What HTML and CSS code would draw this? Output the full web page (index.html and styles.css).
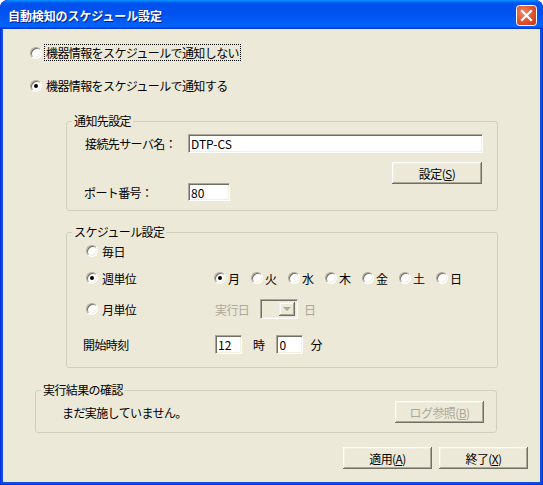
FILE: index.html
```html
<!DOCTYPE html>
<html lang="ja">
<head>
<meta charset="utf-8">
<title>自動検知のスケジュール設定</title>
<link rel="stylesheet" href="styles.css">
</head>
<body>
<div class="window">
  <div class="titlebar">
    <span class="title">自動検知のスケジュール設定</span>
    <span class="close">
      <svg width="21" height="21" viewBox="0 0 21 21">
        <defs>
          <radialGradient id="cg" cx="0.35" cy="0.35" r="0.85">
            <stop offset="0" stop-color="#F08A64"/>
            <stop offset="0.55" stop-color="#E0532C"/>
            <stop offset="1" stop-color="#C23A1B"/>
          </radialGradient>
        </defs>
        <rect x="0.5" y="0.5" width="20" height="20" rx="3" fill="url(#cg)" stroke="#fff"/>
        <path d="M6 6 L15 15 M15 6 L6 15" stroke="#fff" stroke-width="2.2" stroke-linecap="square"/>
      </svg>
    </span>
  </div>
  <div class="client">
    <div class="opt opt-first"><span class="radio"></span><span class="olabel focus">機器情報をスケジュールで通知しない</span></div>
    <div class="opt opt-second"><span class="radio checked"></span><span class="olabel">機器情報をスケジュールで通知する</span></div>

    <fieldset class="group g-notify">
      <legend>通知先設定</legend>
      <div class="frow r-server"><span class="flabel">接続先サーバ名：</span><span class="edit e-server">DTP-CS</span></div>
      <div class="btn-row"><span class="btn">設定(<u>S</u>)</span></div>
      <div class="frow r-port"><span class="flabel">ポート番号：</span><span class="edit e-port">80</span></div>
    </fieldset>

    <fieldset class="group g-sched">
      <legend>スケジュール設定</legend>
      <div class="srow s-daily"><span class="c1"><span class="radio"></span><span>毎日</span></span></div>
      <div class="srow s-weekly">
        <span class="c1"><span class="radio checked"></span><span>週単位</span></span>
        <span class="days">
          <span class="day"><span class="radio checked"></span><span>月</span></span>
          <span class="day"><span class="radio"></span><span>火</span></span>
          <span class="day"><span class="radio"></span><span>水</span></span>
          <span class="day"><span class="radio"></span><span>木</span></span>
          <span class="day"><span class="radio"></span><span>金</span></span>
          <span class="day"><span class="radio"></span><span>土</span></span>
          <span class="day"><span class="radio"></span><span>日</span></span>
        </span>
      </div>
      <div class="srow s-monthly">
        <span class="c1"><span class="radio"></span><span>月単位</span></span>
        <span class="dis exec">実行日</span>
        <span class="combo"><span class="arrow"><span class="tri"></span></span></span>
        <span class="dis dayunit">日</span>
      </div>
      <div class="srow s-start">
        <span class="c1 c1-plain">開始時刻</span>
        <span class="edit e-hour">12</span>
        <span class="unit u-hour">時</span>
        <span class="edit e-min">0</span>
        <span class="unit u-min">分</span>
      </div>
    </fieldset>

    <fieldset class="group g-result">
      <legend>実行結果の確認</legend>
      <div class="rrow"><span>まだ実施していません。</span><span class="btn btn-dis">ログ参照(<u>B</u>)</span></div>
    </fieldset>

    <div class="footer">
      <span class="btn">適用(<u>A</u>)</span>
      <span class="btn">終了(<u>X</u>)</span>
    </div>
  </div>
</div>
</body>
</html>
```
FILE: styles.css
```css
html, body {
  margin: 0;
  padding: 0;
  background: #ffffff;
}
body {
  font-family: "Noto Sans CJK JP", "Noto Sans", sans-serif;
  font-size: 12px;
}
.window {
  width: 543px;
  height: 485px;
  display: flex;
  flex-direction: column;
  background: #0A50E2;
  box-shadow: inset 0 0 0 1px #0831D9;
  border-radius: 8px 8px 0 0;
  overflow: hidden;
}
.titlebar {
  height: 29px;
  flex: none;
  display: flex;
  align-items: center;
  justify-content: space-between;
  padding: 1px 6px 0 8px;
  box-sizing: border-box;
  border-radius: 8px 8px 0 0;
  background: linear-gradient(180deg, #0997FF 0px, #0053EE 3px, #0050EE 12px, #0062F8 25px, #0066FF 26px, #005BFF 27px, #003DD7 28px, #003DD7 29px);
}
.title {
  color: #ffffff;
  font-weight: bold;
  font-size: 12px;
  letter-spacing: -0.1px;
  text-shadow: 1px 1px 0 #0A1E8C;
}
.close {
  display: flex;
  width: 21px;
  height: 21px;
}
.client {
  flex: 1;
  margin: 0 3px 3px 3px;
  background: #ECE9D8;
  color: #000;
  letter-spacing: -0.6px;
  display: flex;
  flex-direction: column;
}

/* radio */
.radio {
  position: relative;
  flex: none;
  width: 12px;
  height: 12px;
  box-sizing: border-box;
  border-radius: 50%;
  border: 1px solid;
  border-color: #ACA899 #ffffff #ffffff #ACA899;
  background: #ffffff;
  box-shadow: inset 1px 1px 0 #716F64, inset -1px -1px 0 #F1EFE2;
}
.radio.checked::after {
  content: "";
  position: absolute;
  left: 3px;
  top: 3px;
  width: 4px;
  height: 4px;
  border-radius: 50%;
  background: #000;
}

.opt {
  display: flex;
  align-items: center;
  height: 17px;
  margin-left: 27px;
}
.opt-first { margin-top: 15px; }
.opt-second { margin-top: 16px; }
.olabel {
  margin-left: 2px;
  padding: 0 1px;
  line-height: 15px;
  border: 1px solid transparent;
}
.olabel.focus {
  border: 1px dotted #000;
}

/* group boxes */
.group {
  margin: 0;
  padding: 0;
  border: 1px solid #D0D0BF;
  border-radius: 3px;
  box-sizing: border-box;
  min-inline-size: 0;
}
.group legend {
  padding: 0 2px;
  margin-left: 5px;
  line-height: 14px;
  height: 14px;
}

/* edit boxes */
.edit {
  box-sizing: border-box;
  display: flex;
  align-items: center;
  border: 1px solid;
  border-color: #ACA899 #ffffff #ffffff #ACA899;
  box-shadow: inset 1px 1px 0 #716F64, inset -1px -1px 0 #F1EFE2;
  background: #ffffff;
  padding: 0 2px;
  letter-spacing: 0;
  flex: none;
}

/* buttons */
.btn {
  width: 89px;
  height: 22px;
  box-sizing: border-box;
  display: flex;
  align-items: center;
  justify-content: center;
  background: #ECE9D8;
  box-shadow: inset -1px -1px 0 #716F64, inset 1px 1px 0 #ffffff, inset -2px -2px 0 #ACA899, inset 2px 2px 0 #F1EFE2;
  flex: none;
}
.btn u {
  text-decoration: underline;
  text-underline-offset: 1px;
}
.btn-dis {
  color: #ACA899;
}

/* group 1 */
.g-notify {
  margin: 20px 0 0 63px;
  width: 432px;
  height: 97px;
}
.frow {
  display: flex;
  align-items: center;
}
.flabel {
  width: 103px;
  flex: none;
}
.r-server {
  margin: 6px 0 0 18px;
  height: 19px;
}
.e-server {
  width: 295px;
  height: 19px;
}
.btn-row {
  display: flex;
  margin: 9px 0 0 325px;
  height: 22px;
}
.btn-row .btn {
  width: 90px;
}
.r-port {
  margin: -1px 0 0 17px;
  height: 18px;
}
.r-port .flabel {
  width: 104px;
}
.e-port {
  width: 42px;
  height: 18px;
}

/* group 2 */
.g-sched {
  margin: 14px 0 0 63px;
  width: 432px;
  height: 143px;
}
.srow {
  display: flex;
  align-items: center;
  height: 20px;
  margin-left: 16px;
}
.s-daily { margin-top: 2px; }
.s-weekly { margin-top: 7px; }
.s-monthly { margin-top: 11px; }
.s-start { margin-top: 16px; height: 19px; }
.c1 {
  width: 131px;
  flex: none;
  display: flex;
  align-items: center;
}
.c1 .radio {
  margin: 0 4px 0 3px;
}
.days {
  display: flex;
  align-items: center;
}
.day {
  display: flex;
  align-items: center;
  width: 37px;
}
.day .radio {
  margin-right: 2px;
}
.dis {
  color: #ACA899;
}
.exec {
  width: 45px;
  flex: none;
  padding-left: 1px;
}
.combo {
  box-sizing: border-box;
  width: 38px;
  height: 20px;
  display: flex;
  justify-content: flex-end;
  align-items: stretch;
  padding: 2px;
  border: 1px solid;
  border-color: #ACA899 #ffffff #ffffff #ACA899;
  box-shadow: inset 1px 1px 0 #716F64, inset -1px -1px 0 #F1EFE2;
  background: #ECE9D8;
  flex: none;
}
.arrow {
  width: 16px;
  display: flex;
  align-items: center;
  justify-content: center;
  background: #ECE9D8;
  box-shadow: inset -1px -1px 0 #716F64, inset 1px 1px 0 #F1EFE2, inset -2px -2px 0 #ACA899, inset 2px 2px 0 #ffffff;
}
.tri {
  width: 0;
  height: 0;
  border-left: 4px solid transparent;
  border-right: 4px solid transparent;
  border-top: 4px solid #ACA899;
}
.dayunit {
  margin-left: 6px;
}
.c1-plain {
  width: 132px;
}
.e-hour {
  width: 27px;
  height: 19px;
}
.u-hour {
  margin: 0 12px 0 11px;
}
.e-min {
  width: 27px;
  height: 19px;
}
.u-min {
  margin-left: 7px;
}

/* group 3 */
.g-result {
  margin: 15px 0 0 32px;
  width: 462px;
  height: 50px;
}
.rrow {
  display: flex;
  align-items: center;
  justify-content: space-between;
  margin: 4px 12px 0 26px;
  height: 22px;
}

/* footer */
.footer {
  display: flex;
  justify-content: flex-end;
  gap: 7px;
  margin: 14px 12px 0 0;
}
```
